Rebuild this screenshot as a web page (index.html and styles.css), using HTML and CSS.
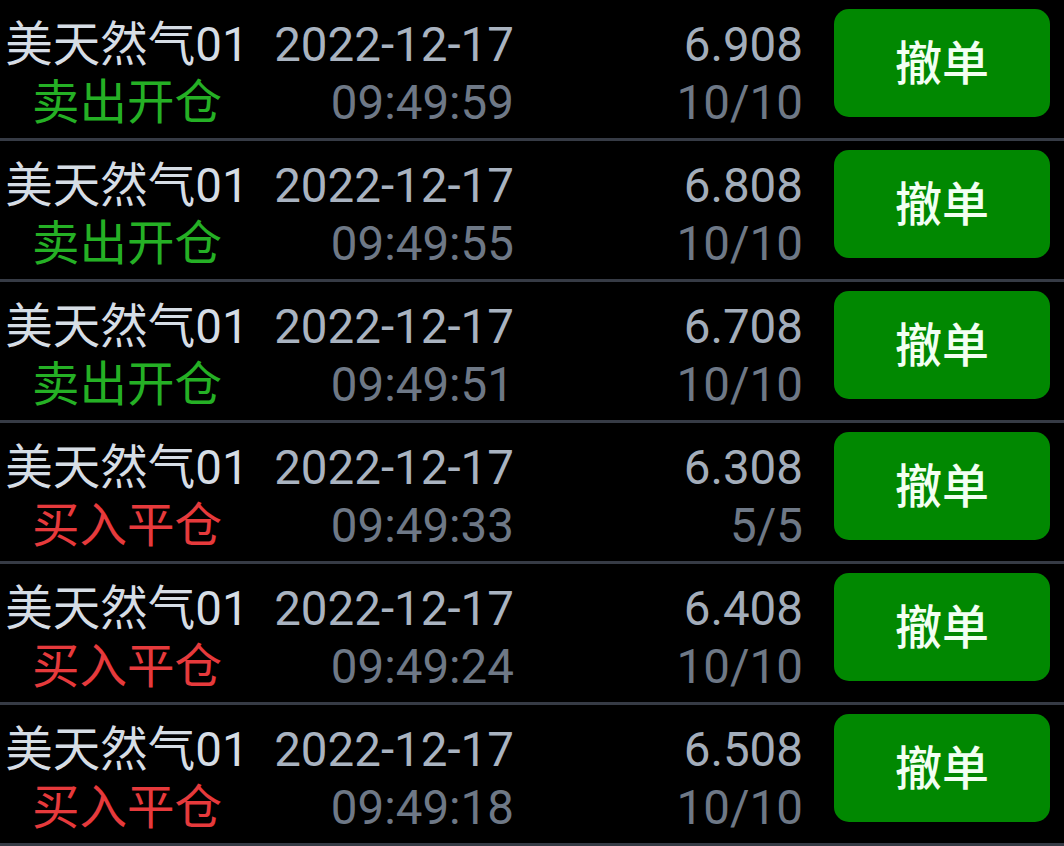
FILE: index.html
```html
<!DOCTYPE html>
<html lang="zh-CN">
<head>
<meta charset="utf-8">
<title>委托单</title>
<link rel="stylesheet" href="styles.css">
</head>
<body>
<div class="list">
  <div class="row">
    <div class="cell c-name"><div class="name">美天然气01</div><div class="act sell">卖出开仓</div></div>
    <div class="cell c-time"><div class="date">2022-12-17</div><div class="time">09:49:59</div></div>
    <div class="cell c-price"><div class="price">6.908</div><div class="qty">10/10</div></div>
    <div class="btn">撤单</div>
  </div>
  <div class="row">
    <div class="cell c-name"><div class="name">美天然气01</div><div class="act sell">卖出开仓</div></div>
    <div class="cell c-time"><div class="date">2022-12-17</div><div class="time">09:49:55</div></div>
    <div class="cell c-price"><div class="price">6.808</div><div class="qty">10/10</div></div>
    <div class="btn">撤单</div>
  </div>
  <div class="row">
    <div class="cell c-name"><div class="name">美天然气01</div><div class="act sell">卖出开仓</div></div>
    <div class="cell c-time"><div class="date">2022-12-17</div><div class="time">09:49:51</div></div>
    <div class="cell c-price"><div class="price">6.708</div><div class="qty">10/10</div></div>
    <div class="btn">撤单</div>
  </div>
  <div class="row">
    <div class="cell c-name"><div class="name">美天然气01</div><div class="act buy">买入平仓</div></div>
    <div class="cell c-time"><div class="date">2022-12-17</div><div class="time">09:49:33</div></div>
    <div class="cell c-price"><div class="price">6.308</div><div class="qty">5/5</div></div>
    <div class="btn">撤单</div>
  </div>
  <div class="row">
    <div class="cell c-name"><div class="name">美天然气01</div><div class="act buy">买入平仓</div></div>
    <div class="cell c-time"><div class="date">2022-12-17</div><div class="time">09:49:24</div></div>
    <div class="cell c-price"><div class="price">6.408</div><div class="qty">10/10</div></div>
    <div class="btn">撤单</div>
  </div>
  <div class="row">
    <div class="cell c-name"><div class="name">美天然气01</div><div class="act buy">买入平仓</div></div>
    <div class="cell c-time"><div class="date">2022-12-17</div><div class="time">09:49:18</div></div>
    <div class="cell c-price"><div class="price">6.508</div><div class="qty">10/10</div></div>
    <div class="btn">撤单</div>
  </div>
</div>
</body>
</html>
```
FILE: styles.css
```css
html, body {
  margin: 0;
  padding: 0;
  background: #000;
}
body {
  font-family: Roboto, "Noto Sans CJK SC", sans-serif;
  font-size: 47.5px;
  overflow: hidden;
}
.list {
  display: flex;
  flex-direction: column;
}
.row {
  display: grid;
  grid-template-columns: 254px 260px 289px 216px;
  column-gap: 0;
  height: 138px;
  border-bottom: 3px solid #363b45;
  box-sizing: content-box;
}
.cell {
  padding-top: 16px;
  line-height: 58px;
  white-space: nowrap;
}
.c-name { text-align: center; }
.c-time, .c-price { text-align: right; }
.name { color: #d6dde5; }
.date { color: #a9b3c0; }
.time { color: #6e7886; }
.price { color: #a3adba; }
.qty { color: #6e7886; }
.sell { color: #25b025; }
.buy { color: #e63a3c; }
.btn {
  margin: 9px 0 0 31px;
  width: 216px;
  height: 108px;
  border-radius: 15px;
  background: #018801;
  color: #f2fff2;
  font-size: 47px;
  font-weight: 500;
  display: flex;
  align-items: center;
  justify-content: center;
  line-height: 1;
}
```
